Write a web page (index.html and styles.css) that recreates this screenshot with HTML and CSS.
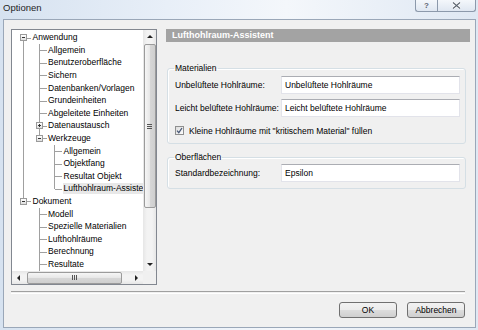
FILE: index.html
```html
<!DOCTYPE html>
<html>
<head>
    <title>Optionen</title>
    <link rel="stylesheet" href="styles.css">
</head>
<body>
    <div class="window">
        <div class="titlebar">
            <span class="title">Optionen</span>
            <div class="caption-buttons">
                <span class="cap-btn help">?</span>
                <span class="cap-btn close">
                    <svg width="9" height="7" viewBox="0 0 9 7"><path d="M1 0.5 L8 6.5 M8 0.5 L1 6.5" stroke="#fff" stroke-width="2.6"/><path d="M1 0.5 L8 6.5 M8 0.5 L1 6.5" stroke="#5b6470" stroke-width="1.1"/></svg>
                </span>
            </div>
        </div>

        <div class="dialog">
            <div class="main">
                <!-- Navigation tree -->
                <div class="tree-box">
                    <div class="tree-view">
                        <ul class="tree">
                            <li class="row"><span class="g f"><i class="box minus"></i></span><span class="label">Anwendung</span></li>
                            <li class="row"><span class="g v"></span><span class="g t"></span><span class="label">Allgemein</span></li>
                            <li class="row"><span class="g v"></span><span class="g t"></span><span class="label">Benutzeroberfläche</span></li>
                            <li class="row"><span class="g v"></span><span class="g t"></span><span class="label">Sichern</span></li>
                            <li class="row"><span class="g v"></span><span class="g t"></span><span class="label">Datenbanken/Vorlagen</span></li>
                            <li class="row"><span class="g v"></span><span class="g t"></span><span class="label">Grundeinheiten</span></li>
                            <li class="row"><span class="g v"></span><span class="g t"></span><span class="label">Abgeleitete Einheiten</span></li>
                            <li class="row"><span class="g v"></span><span class="g t"><i class="box plus"></i></span><span class="label">Datenaustausch</span></li>
                            <li class="row"><span class="g v"></span><span class="g l"><i class="box minus"></i></span><span class="label">Werkzeuge</span></li>
                            <li class="row"><span class="g v"></span><span class="g"></span><span class="g t"></span><span class="label">Allgemein</span></li>
                            <li class="row"><span class="g v"></span><span class="g"></span><span class="g t"></span><span class="label">Objektfang</span></li>
                            <li class="row"><span class="g v"></span><span class="g"></span><span class="g t"></span><span class="label">Resultat Objekt</span></li>
                            <li class="row"><span class="g v"></span><span class="g"></span><span class="g l"></span><span class="label selected">Lufthohlraum-Assistent</span></li>
                            <li class="row"><span class="g l"><i class="box minus"></i></span><span class="label">Dokument</span></li>
                            <li class="row"><span class="g"></span><span class="g t"></span><span class="label">Modell</span></li>
                            <li class="row"><span class="g"></span><span class="g t"></span><span class="label">Spezielle Materialien</span></li>
                            <li class="row"><span class="g"></span><span class="g t"></span><span class="label">Lufthohlräume</span></li>
                            <li class="row"><span class="g"></span><span class="g t"></span><span class="label">Berechnung</span></li>
                            <li class="row"><span class="g"></span><span class="g t"></span><span class="label">Resultate</span></li>
                        </ul>
                    </div>
                    <div class="vscroll">
                        <span class="arrow-btn"><i class="tri up"></i></span>
                        <span class="track">
                            <span class="thumb-v"><i class="grip-v"></i></span>
                        </span>
                        <span class="arrow-btn"><i class="tri down"></i></span>
                    </div>
                    <div class="hscroll">
                        <span class="arrow-btn"><i class="tri left"></i></span>
                        <span class="track">
                            <span class="thumb-h"><i class="grip-h"></i></span>
                        </span>
                        <span class="arrow-btn"><i class="tri right"></i></span>
                    </div>
                    <div class="corner"></div>
                </div>

                <!-- Settings page -->
                <div class="page">
                    <div class="page-title">Lufthohlraum-Assistent</div>

                    <fieldset class="group materials">
                        <legend>Materialien</legend>
                        <div class="field">
                            <label>Unbelüftete Hohlräume:</label>
                            <span class="input">Unbelüftete Hohlräume</span>
                        </div>
                        <div class="field">
                            <label>Leicht belüftete Hohlräume:</label>
                            <span class="input">Leicht belüftete Hohlräume</span>
                        </div>
                        <div class="check-row">
                            <span class="check">
                                <svg width="7" height="7" viewBox="0 0 7 7"><path d="M1 3.6 L2.8 5.6 L6 1" fill="none" stroke="#4a5a78" stroke-width="1.3"/></svg>
                            </span>
                            <span>Kleine Hohlräume mit "kritischem Material" füllen</span>
                        </div>
                    </fieldset>

                    <fieldset class="group surfaces">
                        <legend>Oberflächen</legend>
                        <div class="field">
                            <label>Standardbezeichnung:</label>
                            <span class="input">Epsilon</span>
                        </div>
                    </fieldset>
                </div>
            </div>

            <div class="separator"></div>

            <div class="buttons">
                <button class="btn">OK</button>
                <button class="btn">Abbrechen</button>
            </div>
        </div>
    </div>
</body>
</html>
```

FILE: styles.css
```css
/* Options dialog, Windows 7 look */
body {
    margin: 0;
    padding: 0;
    font-family: "Liberation Sans", Arial, sans-serif;
    font-size: 8.5px;
    color: #000;
    background-color: #dfe8f3;
}

.window {
    width: 478px;
    height: 330px;
    display: flex;
    flex-direction: column;
    background: linear-gradient(to right, #d6e2f0 0%, #e8eff8 35%, #f4f7fb 60%, #dfe8f3 100%);
}

/* Title bar */
.titlebar {
    height: 19px;
    flex: none;
    display: flex;
    justify-content: space-between;
    align-items: flex-start;
}

.title {
    font-size: 9.5px;
    line-height: 16px;
    padding-left: 3px;
    color: #1e1e1e;
}

.caption-buttons {
    display: flex;
    margin-right: 2px;
}

.cap-btn {
    height: 11px;
    display: flex;
    align-items: center;
    justify-content: center;
    border: 1px solid #8c99ab;
    border-top: none;
    background: linear-gradient(#f4f7fb, #dfe7f1);
    color: #5b6470;
    font-size: 8px;
    font-weight: bold;
}

.cap-btn.help {
    width: 21px;
    border-radius: 0 0 0 3px;
    border-right: none;
}

.cap-btn.close {
    width: 37px;
    border-radius: 0 0 3px 0;
}

/* Dialog body */
.dialog {
    flex: 1;
    margin: 0 2px 2px 3px;
    border: 1px solid #9aa7b8;
    background-color: #f0f0f0;
    display: flex;
    flex-direction: column;
}

.main {
    display: flex;
    padding: 9px 5px 0 7px;
    gap: 9px;
}

/* Tree */
.tree-box {
    width: 146px;
    height: 256px;
    box-sizing: border-box;
    border: 1px solid #828790;
    background-color: #fff;
    display: grid;
    grid-template-columns: 131px 13px;
    grid-template-rows: 241px 13px;
}

.tree-view {
    overflow: hidden;
}

.tree {
    list-style: none;
    margin: 0;
    padding: 1.4px 0 0 3.5px;
}

.row {
    height: 12.6px;
    display: flex;
    align-items: center;
    white-space: nowrap;
}

.g {
    width: 15.5px;
    height: 100%;
    flex: none;
    position: relative;
}

.g.v::before,
.g.t::before,
.g.l::before,
.g.f::before {
    content: "";
    position: absolute;
    left: 7.5px;
    top: 0;
    bottom: 0;
    border-left: 1px solid #a0a0a0;
}

.g.l::before {
    bottom: 50%;
}

.g.f::before {
    top: 50%;
}

.g.t::after,
.g.l::after,
.g.f::after {
    content: "";
    position: absolute;
    left: 8px;
    right: 0;
    top: 50%;
    border-top: 1px solid #a0a0a0;
}

.box {
    position: absolute;
    left: 4.5px;
    top: 50%;
    margin-top: -3.5px;
    width: 7px;
    height: 7px;
    box-sizing: border-box;
    border: 1px solid #9a9a9a;
    background: linear-gradient(#fff, #dedede);
    z-index: 1;
}

.box::before {
    content: "";
    position: absolute;
    left: 1px;
    top: 2px;
    width: 3px;
    height: 1px;
    background-color: #333;
}

.box.plus::after {
    content: "";
    position: absolute;
    left: 2px;
    top: 1px;
    width: 1px;
    height: 3px;
    background-color: #333;
}

.label {
    padding: 0 1px;
    line-height: 11px;
    margin-left: 0.5px;
}

.label.selected {
    background-color: #e8e8e8;
}

/* Scrollbars */
.vscroll,
.hscroll {
    display: flex;
    background: linear-gradient(to right, #e6e6e6, #f3f3f3 30%, #f3f3f3 70%, #e6e6e6);
}

.vscroll {
    grid-row: 1;
    grid-column: 2;
    flex-direction: column;
}

.hscroll {
    grid-row: 2;
    grid-column: 1;
    background: linear-gradient(#e6e6e6, #f3f3f3 30%, #f3f3f3 70%, #e6e6e6);
}

.corner {
    background-color: #f0f0f0;
}

.arrow-btn {
    width: 13px;
    height: 13px;
    flex: none;
    display: flex;
    align-items: center;
    justify-content: center;
}

.track {
    flex: 1;
    display: flex;
}

.vscroll .track {
    flex-direction: column;
    padding-top: 1px;
}

.hscroll .track {
    padding-left: 2px;
}

.thumb-v {
    height: 164px;
    margin: 0 0.5px;
    border: 1px solid #9b9b9b;
    border-radius: 2px;
    background: linear-gradient(to right, #f6f6f6, #e8e8e8 45%, #d6d6d6 55%, #cfcfcf);
    display: flex;
    align-items: center;
    justify-content: center;
    box-sizing: border-box;
}

.thumb-h {
    width: 95px;
    margin: 0.5px 0;
    border: 1px solid #9b9b9b;
    border-radius: 2px;
    background: linear-gradient(#f6f6f6, #e8e8e8 45%, #d6d6d6 55%, #cfcfcf);
    display: flex;
    align-items: center;
    justify-content: center;
    box-sizing: border-box;
}

.grip-v {
    width: 5px;
    height: 5px;
    background: repeating-linear-gradient(#555 0 1px, transparent 1px 2px);
}

.grip-h {
    width: 5px;
    height: 5px;
    background: repeating-linear-gradient(to right, #555 0 1px, transparent 1px 2px);
}

.tri {
    width: 0;
    height: 0;
    border: 3px solid transparent;
}

.tri.up {
    border-bottom-color: #222;
    border-top-width: 0;
}

.tri.down {
    border-top-color: #222;
    border-bottom-width: 0;
}

.tri.left {
    border-right-color: #222;
    border-left-width: 0;
}

.tri.right {
    border-left-color: #222;
    border-right-width: 0;
}

/* Settings page */
.page {
    width: 304px;
    display: flex;
    flex-direction: column;
}

.page-title {
    height: 13px;
    line-height: 13px;
    background-color: #a3a3a3;
    color: #fff;
    font-weight: bold;
    font-size: 9px;
    padding-left: 6px;
}

.group {
    margin: 0 4px 0 1px;
    padding: 0 5px 6px 7px;
    border: 1px solid #d5dfe5;
    border-radius: 3px;
    box-shadow: inset 1px 1px 0 #fff;
}

.group legend {
    padding: 0 1px;
    margin-left: -1px;
    line-height: 10px;
}

.materials {
    margin-top: 21px;
}

.surfaces {
    margin-top: 8px;
}

.field {
    display: flex;
    align-items: center;
    margin-top: 3px;
}

.field + .field {
    margin-top: 5px;
}

.surfaces .field {
    margin-top: 2px;
}

.field label {
    width: 106px;
    flex: none;
}

.input {
    flex: 1;
    height: 18px;
    line-height: 16px;
    box-sizing: border-box;
    border: 1px solid #e2e3ea;
    border-top-color: #abadb3;
    background-color: #fff;
    padding-left: 3px;
}

.check-row {
    display: flex;
    align-items: center;
    gap: 5px;
    margin-top: 7px;
    height: 13px;
}

.check {
    width: 9px;
    height: 9px;
    box-sizing: border-box;
    border: 1px solid #8e8f8f;
    background: linear-gradient(135deg, #dcdcdc, #fdfdfd);
    display: flex;
    align-items: center;
    justify-content: center;
}

/* Bottom */
.separator {
    margin: 6px 10px 0 7px;
    height: 1px;
    border-top: 1px solid #a0a0a0;
    border-bottom: 1px solid #fff;
}

.buttons {
    display: flex;
    justify-content: flex-end;
    gap: 10px;
    padding: 8px 10px 0 0;
}

.btn {
    width: 58px;
    height: 16px;
    padding: 0;
    border: 1px solid #707070;
    border-radius: 3px;
    background: linear-gradient(#f2f2f2 0%, #ebebeb 50%, #dddddd 50%, #cfcfcf 100%);
    font-family: "Liberation Sans", Arial, sans-serif;
    font-size: 8.5px;
    color: #000;
}
```
